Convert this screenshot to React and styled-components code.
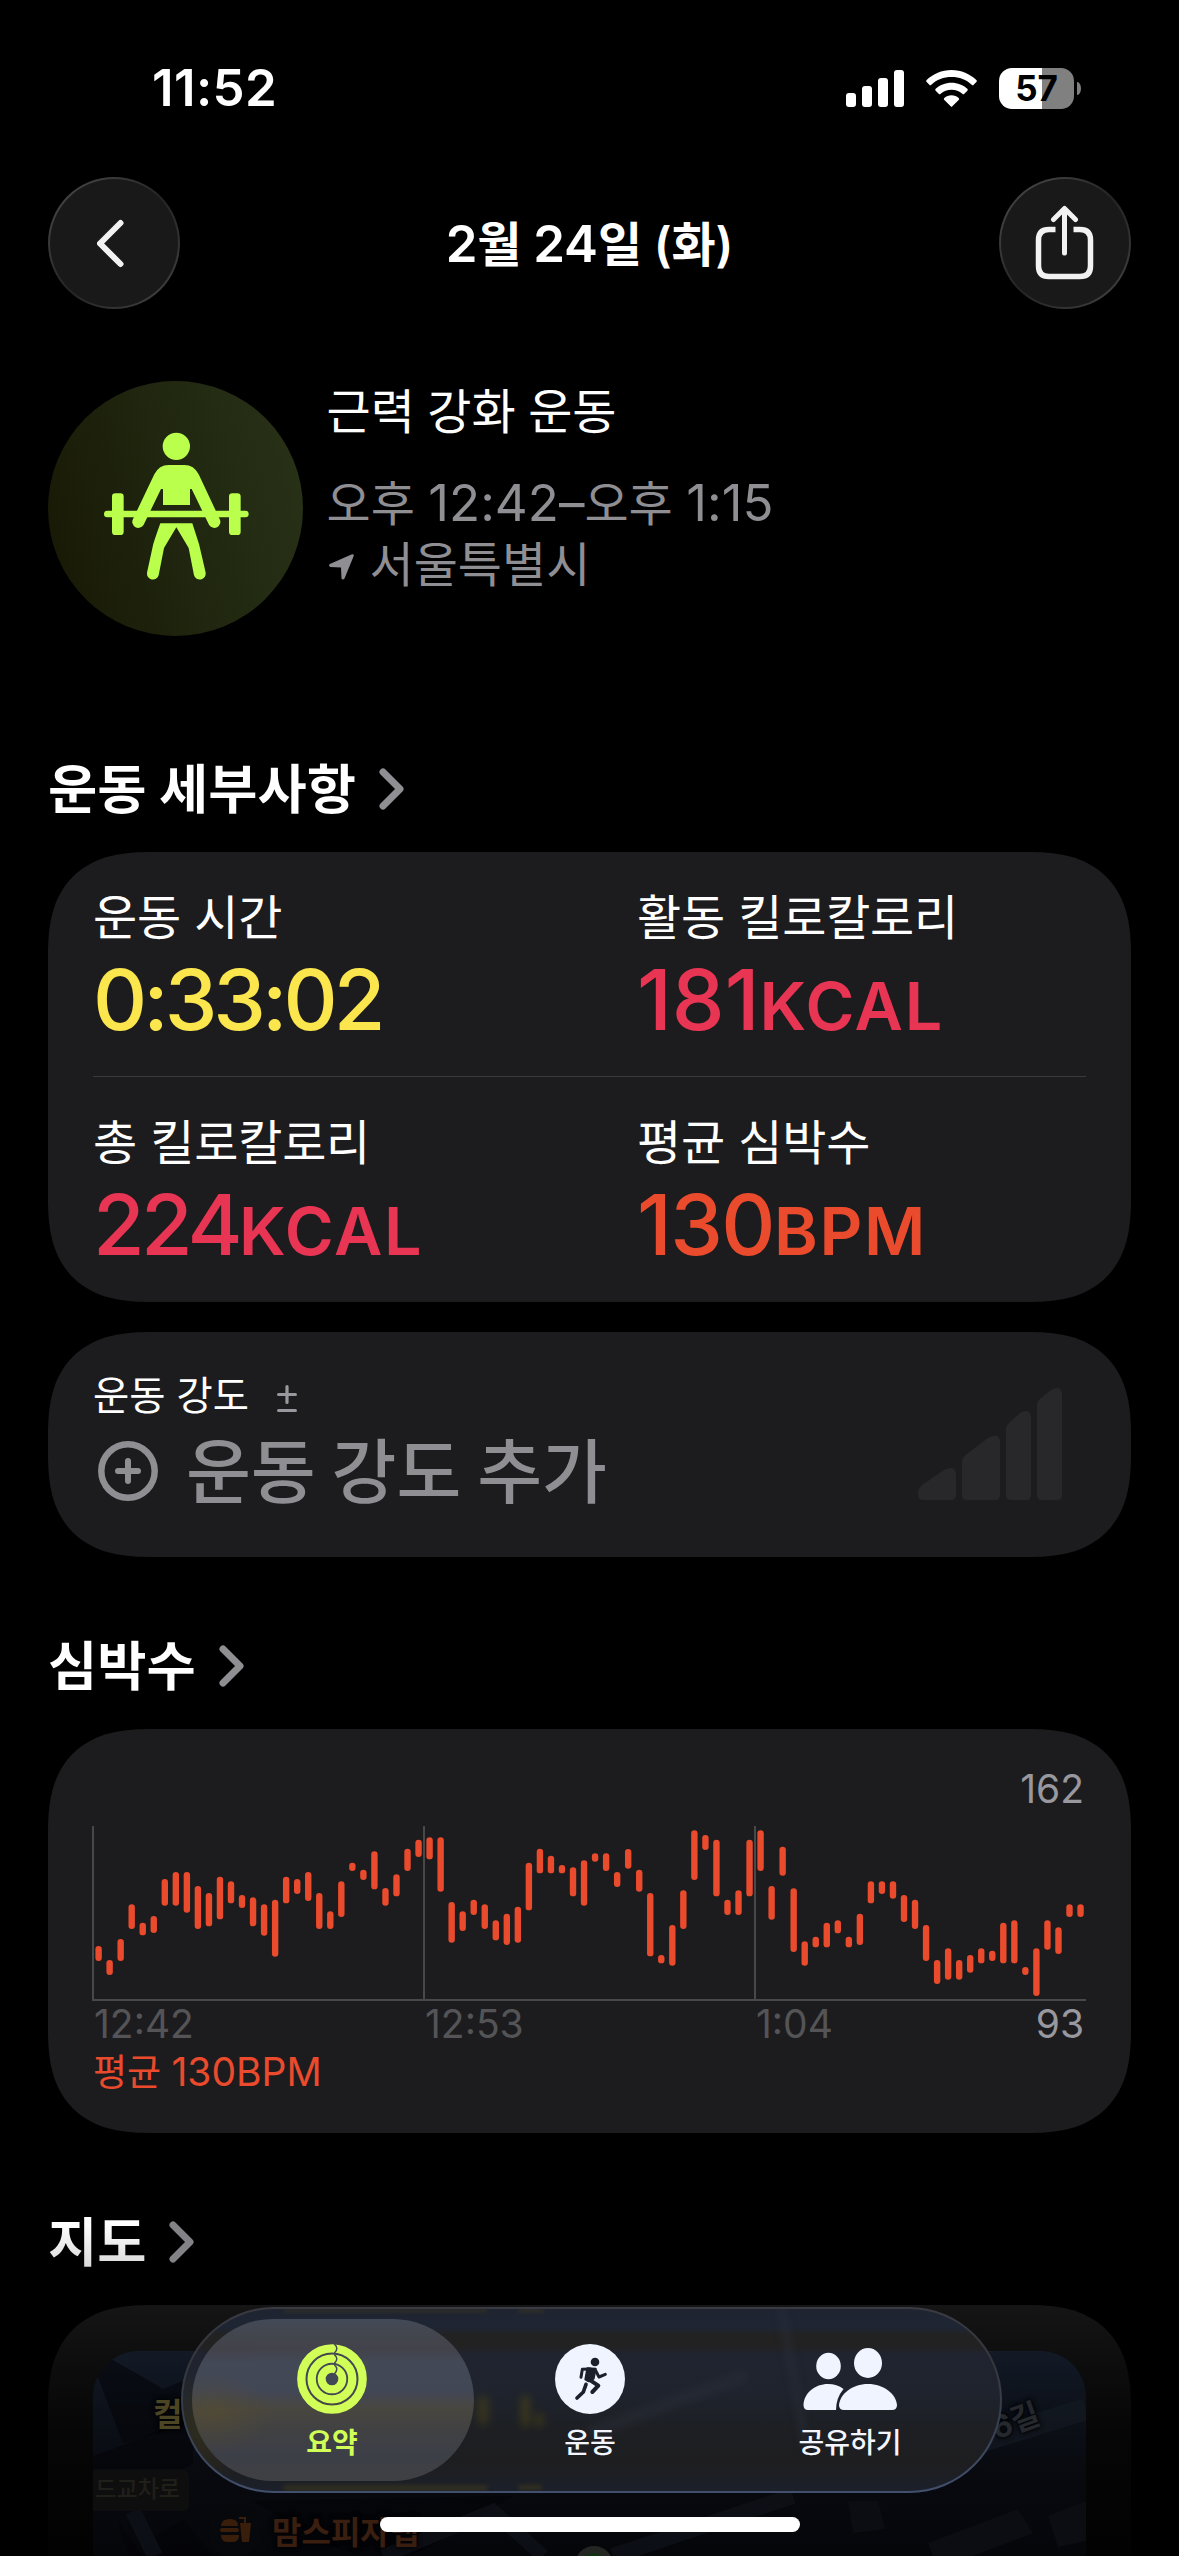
import React from 'react';
import styled, { createGlobalStyle } from 'styled-components';

const GlobalStyle = createGlobalStyle`
  * { box-sizing: border-box; }
  html, body { margin: 0; padding: 0; background: #000; }
  body { width: 1179px; height: 2556px; overflow: hidden; }
`;

const Screen = styled.main`
  position: relative;
  width: 1179px;
  height: 2556px;
  overflow: hidden;
  background: #000;
  color: #fff;
  font-family: Inter, 'Noto Sans CJK KR', sans-serif;
  white-space: nowrap;
`;

/* ---------- status bar ---------- */

const StatusBar = styled.div`
  display: flex;
  align-items: center;
  justify-content: space-between;
  height: 177px;
  padding: 0 98px 0 152px;
`;

const Clock = styled.span`
  margin-top: -2px;
  font-size: 51px;
  font-weight: 600;
  line-height: 60px;
  letter-spacing: 0.4px;
`;

const StatusIcons = styled.div`
  display: flex;
  align-items: center;
  gap: 22px;
`;

const Battery = styled.div`
  display: flex;
  align-items: center;
  gap: 3px;
`;

const BatteryBody = styled.div`
  display: flex;
  align-items: center;
  justify-content: center;
  width: 75px;
  height: 41px;
  border-radius: 13px;
  background: linear-gradient(90deg, #fff 57%, #808080 57%);
  color: #000;
  font-size: 35px;
  font-weight: 700;
  line-height: 41px;
`;

const BatteryTip = styled.div`
  width: 4px;
  height: 13px;
  border-radius: 0 4px 4px 0 / 0 7px 7px 0;
  background: #808080;
`;

/* ---------- navigation ---------- */

const NavBar = styled.header`
  display: grid;
  grid-template-columns: 132px 1fr 132px;
  align-items: center;
  height: 132px;
  padding: 0 48px;
`;

const RoundButton = styled.button`
  display: flex;
  align-items: center;
  justify-content: center;
  width: 132px;
  height: 132px;
  padding: 0;
  border: 2px solid transparent;
  border-radius: 50%;
  background:
    linear-gradient(#191919, #191919) padding-box,
    linear-gradient(135deg, #4a4a4a 0%, #3a3a3a 25%, #242424 50%, #333 75%, #484848 100%) border-box;
`;

const NavTitle = styled.h1`
  margin: 2px 0 0;
  text-align: center;
  font-size: 48px;
  font-weight: 600;
  line-height: 61px;
  letter-spacing: -0.15px;
`;

const Num = styled.span`
  font-size: 51px;
`;

/* ---------- workout header ---------- */

const Content = styled.div`
  padding: 0 48px;
`;

const Hero = styled.section`
  display: flex;
  gap: 23.5px;
  height: 255px;
  margin-top: 72px;
`;

const Medallion = styled.div`
  flex: none;
  width: 255px;
  height: 255px;
  border-radius: 50%;
  background: linear-gradient(75deg, #191a06 8%, #20260f 50%, #283217 95%);
`;

const HeroText = styled.div`
  display: flex;
  flex-direction: column;
`;

const HeroTitle = styled.div`
  margin-bottom: 30px;
  font-size: 48px;
  line-height: 61px;
  word-spacing: -1px;
`;

const HeroLine = styled.div`
  display: flex;
  align-items: center;
  gap: 16px;
  color: #8e8e93;
  font-size: 48px;
  line-height: 61px;

  svg { margin: 5px 0 0 2px; }
`;

/* ---------- sections ---------- */

const SectionHeader = styled.div`
  display: flex;
  align-items: center;
  gap: 23px;
  height: 64px;
  margin: ${(p) => p.$top || 76}px 0 32px;
  color: ${(p) => p.$color || '#8e8e93'};
`;

const SectionTitle = styled.h2`
  margin: 3px 0 0;
  background: ${(p) => (p.$fade ? 'linear-gradient(#fff 20%, #d8d8d8 90%)' : '#fff')};
  background-clip: text;
  color: transparent;
  font-size: 53.5px;
  font-weight: 700;
  line-height: 64px;
`;

const Card = styled.section`
  height: ${(p) => p.$h}px;
  padding: 0 45px;
  border-radius: 78px;
  background: #1c1c1e;
  @supports (corner-shape: superellipse(1.3)) {
    border-radius: 104px;
    corner-shape: superellipse(1.35);
  }
`;

const MetricRow = styled.div`
  display: grid;
  grid-template-columns: 544px 1fr;
  height: 225px;
  border-bottom: ${(p) => (p.$divider ? '1px solid #3a3a3c' : '0')};
`;

const Metric = styled.div`
  padding-top: 35px;
`;

const MetricLabel = styled.div`
  font-size: 48px;
  line-height: 61px;
  letter-spacing: -0.2px;
`;

const MetricValue = styled.div`
  margin-top: 10px;
  color: ${(p) => p.$color};
  font-size: 84px;
  font-weight: 500;
  line-height: 84px;
  letter-spacing: ${(p) => p.$track}px;
`;

const Unit = styled.span`
  font-size: 66.5px;
  font-weight: 600;
  letter-spacing: 1.7px;
`;

const EffortCard = styled(Card)`
  display: flex;
  justify-content: space-between;
  margin-top: 30px;
  padding-right: 69px;
`;

const EffortText = styled.div`
  padding-top: 40px;
`;

const EffortLabel = styled.div`
  display: flex;
  align-items: center;
  gap: 28px;
  color: #fff;
  font-size: 39.4px;
  line-height: 49px;
`;

const EffortAction = styled.div`
  display: flex;
  align-items: center;
  gap: 28px;
  margin-top: 4px;
  padding-left: 5px;
  color: #8e8e93;
  font-family: 'Noto Sans CJK KR', sans-serif;
  font-size: 70.5px;
  font-weight: 500;
  line-height: 84px;

  svg { margin-top: 7px; }
`;

/* ---------- heart rate ---------- */

const HeartCard = styled(Card)`
  display: flex;
  flex-direction: column;
`;

const MaxValue = styled.div`
  padding: 36px 2px 0 0;
  color: #98989e;
  font-size: 39px;
  line-height: 48px;
  text-align: right;
`;

const Plot = styled.svg`
  display: block;
  margin-top: 13px;
  overflow: visible;
`;

const AxisRow = styled.div`
  display: grid;
  grid-template-columns: 331px 331px 1fr auto;
  margin-top: -1px;
  padding: 0 2px 0 1px;
  color: #545457;
  font-size: 39px;
  line-height: 48px;
`;

const MinValue = styled.span`
  color: #98989e;
`;

const Average = styled.div`
  color: #eb4b2d;
  font-size: 37px;
  line-height: 48px;
`;

const AverageNum = styled.span`
  font-size: 39px;
`;

/* ---------- map ---------- */

const MapCard = styled(Card)`
  padding-top: 46px;
  background: linear-gradient(#151515 0, #0d0d0d 60px, #060606 130px, #020202 250px);
`;

const MapView = styled.div`
  position: relative;
  height: 500px;
  overflow: hidden;
  border-radius: 46px;
  background: linear-gradient(#131a26 0, #0d121b 50px, #080a0f 120px, #05060a 205px);
`;

const MapDrawing = styled.svg`
  position: absolute;
  inset: 0;
`;

const Place = styled.span`
  position: absolute;
  left: ${(p) => p.$x}px;
  top: ${(p) => p.$y}px;
  color: ${(p) => p.$color};
  font-size: ${(p) => p.$size || 32}px;
  font-weight: 700;
  line-height: 40px;
  transform: rotate(${(p) => p.$turn || 0}deg);
  text-shadow: 0 0 5px #020305, 0 0 5px #020305;
`;

const Junction = styled.span`
  position: absolute;
  left: 0;
  top: 119px;
  width: 96px;
  height: 41px;
  padding-right: 9px;
  border-radius: 0 6px 6px 0;
  background: #0f0e0e;
  color: #211f1a;
  text-align: right;
  font-size: 23px;
  font-weight: 500;
  line-height: 39px;
`;

/* ---------- tab bar ---------- */

const TabBar = styled.nav`
  position: absolute;
  left: 181px;
  top: 2307px;
  display: flex;
  width: 821px;
  height: 186px;
  padding: 12px 10px 12px 9px;
  border: 2px solid transparent;
  border-radius: 93px;
  background:
    radial-gradient(ellipse 50px 60px at 18px 120px, rgba(82, 72, 25, 0.35), transparent) padding-box,
    linear-gradient(#1f2430 0, #1e2533 18px, #222222 26px, #222223 38px, #1f2430 46px, #1e232d 85px, #1d1f23 120px, #1e1e20 155px, #1b202b 184px) padding-box,
    linear-gradient(#3a3a42, #35373c 30%, #37404f 60%, #42506e) border-box;
  overflow: hidden;
`;

const Glow = styled.span`
  position: absolute;
  left: ${(p) => p.$x}px;
  top: ${(p) => p.$y}px;
  width: ${(p) => p.$w}px;
  height: ${(p) => p.$h}px;
  border-radius: 6px;
  background: ${(p) => p.$color || '#5a4d12'};
  opacity: ${(p) => p.$o || 0.4};
  filter: blur(${(p) => p.$blur || 4}px);
  transform: rotate(${(p) => p.$turn || 0}deg);
`;

const Tab = styled.button`
  position: relative;
  display: flex;
  flex: none;
  flex-direction: column;
  align-items: center;
  width: ${(p) => p.$w}px;
  height: 162px;
  margin-top: -2px;
  padding: 25px ${(p) => (p.$active ? 2 : 0)}px 0 0;
  border: 0;
  border-radius: 81px;
  background: ${(p) =>
    p.$active
      ? 'radial-gradient(ellipse 60px 40px at 20px 94px, rgba(88,78,46,0.5), transparent), linear-gradient(#434a58 0, #43464e 14px, #42424a 30px, #434957 44px, #424755 72px, #48463f 90px, #414143 112px, #3d3f48 136px, #3f4042 162px)'
      : 'transparent'};
  color: ${(p) => (p.$active ? '#d1ff57' : '#f4f6ff')};
  font-family: 'Noto Sans CJK KR', sans-serif;
  font-size: 28px;
  font-weight: ${(p) => (p.$active ? 700 : 500)};
`;

const TabLabel = styled.span`
  margin-top: 10px;
  line-height: 34px;
`;

const HomeIndicator = styled.div`
  position: absolute;
  left: 380px;
  top: 2517px;
  width: 420px;
  height: 15px;
  border-radius: 8px;
  background: #fff;
`;

/* ---------- icons ---------- */

const Signal = () => (
  <svg width="58" height="37" viewBox="0 0 58 37" fill="#fff">
    <rect x="0" y="23" width="10" height="14" rx="3" />
    <rect x="16" y="16" width="10" height="21" rx="3" />
    <rect x="32" y="8" width="10" height="29" rx="3" />
    <rect x="48" y="0" width="10" height="37" rx="3" />
  </svg>
);

const Wifi = () => (
  <svg width="51" height="37" viewBox="0 0 153 111" fill="#fff">
    <path d="M76.500 0 C106 0 132 12 151 30 Q154 33 151 36 L143 44 Q140 47 137 44 C121 29 100 21 76.500 21 C53 21 32 29 16 44 Q13 47 10 44 L2 36 Q-1 33 2 30 C21 12 47 0 76.500 0Z" />
    <path d="M76.500 38 C95 38 112 45 124 56 Q127 59 124 62 L115 71 Q112 74 109 71 C100 63 89 59 76.500 59 C64 59 53 63 44 71 Q41 74 38 71 L29 62 Q26 59 29 56 C41 45 58 38 76.500 38Z" />
    <path d="M76.500 76 C85 76 92 79 98 84 Q101 87 98 90 L79 109 Q76.500 112 74 109 L55 90 Q52 87 55 84 C61 79 68 76 76.500 76Z" />
  </svg>
);

const BackArrow = () => (
  <svg width="34" height="54" viewBox="0 0 34 54" fill="none" stroke="#f2f2f2" strokeWidth="6" strokeLinecap="round" strokeLinejoin="round">
    <path d="M23.500 7 L3 27.500 L23.500 48" />
  </svg>
);

const Share = () => (
  <svg width="60" height="76" viewBox="0 0 60 76" fill="none" stroke="#f2f2f2" strokeWidth="5.500">
    <path d="M20.500 24.500 H14 Q3.500 24.500 3.500 35 V61 Q3.500 71.500 14 71.500 H45 Q55.500 71.500 55.500 61 V35 Q55.500 24.500 45 24.500 H38.500" />
    <path d="M29.500 4 V48 M18.500 14.500 L29.500 3.500 L40.500 14.500" strokeWidth="5" strokeLinecap="round" strokeLinejoin="round" />
  </svg>
);

const Lifter = () => (
  <svg width="255" height="255" viewBox="-126 -117 765 765" fill="#bbff4d">
    <circle cx="259" cy="79" r="41" />
    <path d="M236 135 H283 Q312 135 326 163 L389 297 A18 18 0 0 1 357 314 L305 207 H300 V255 H219 V207 H213 L161 314 A18 18 0 0 1 129 297 L193 163 Q207 135 236 135Z" />
    <rect x="42" y="272" width="434" height="20" rx="10" />
    <rect x="66" y="220" width="35" height="125" rx="10" />
    <rect x="417" y="220" width="35" height="125" rx="10" />
    <path d="M211 310 H307 L327 372 Q329 380 347 458 A18 18 0 0 1 312 466 L296 384 L259 322 L222 384 L206 466 A18 18 0 0 1 171 458 L188 380 Q189 372 211 310Z" />
  </svg>
);

const LocationArrow = () => (
  <svg width="25" height="26" viewBox="0 0 25 26" fill="#8e8e93">
    <path d="M22.500 .5 Q25.500 -.5 24.500 2.500 L15.500 24.500 Q14 26.500 12.500 24.500 L12 13.500 L1.500 13 Q-1 12 .8 10Z" />
  </svg>
);

const Chevron = () => (
  <svg width="25" height="42" viewBox="0 0 25 42" fill="none" stroke="currentColor" strokeWidth="7" strokeLinecap="round" strokeLinejoin="round" transform="translate(0 1)">
    <path d="M4 4 L21 21 L4 38" />
  </svg>
);

const PlusMinus = () => (
  <svg width="20" height="28" viewBox="0 0 20 28" fill="none" stroke="#98989e" strokeWidth="3.200" strokeLinecap="round" transform="translate(0 2)">
    <path d="M1.600 9.500 H18.400 M10 1.600 V17.500 M1.600 25.500 H18.400" />
  </svg>
);

const PlusCircle = () => (
  <svg width="60" height="60" viewBox="0 0 60 60" fill="none" stroke="#8e8e93" strokeWidth="6.500" strokeLinecap="round">
    <circle cx="30" cy="30" r="26.700" />
    <path d="M20 30 H40 M30 20 V40" strokeWidth="6" />
  </svg>
);

const EffortGraph = styled.svg`
  margin-top: 56px;
`;

const EffortBars = () => (
  <EffortGraph width="144" height="112" viewBox="0 0 144 112" fill="#28282a">
    <path d="M0 105 Q0 101 4 97 L26 82 Q38 76 38 88 V107 Q38 112 33 112 H5 Q0 112 0 107Z" />
    <path d="M44 74 Q44 69 49 66 L70 50 Q82 43 82 55 V107 Q82 112 77 112 H49 Q44 112 44 107Z" />
    <path d="M88 42 Q88 37 92 34 L102 25 Q113 19 113 30 V107 Q113 112 108 112 H93 Q88 112 88 107Z" />
    <path d="M119 18 Q119 13 123 10 L133 2 Q144 -4 144 8 V107 Q144 112 139 112 H124 Q119 112 119 107Z" />
  </EffortGraph>
);

const RingsIcon = () => (
  <svg width="70" height="70" viewBox="0 0 210 210" fill="none">
    <circle cx="105" cy="105" r="92" stroke="#d1ff57" strokeWidth="25" />
    <circle cx="105" cy="105" r="61" stroke="#d1ff57" strokeWidth="25" />
    <circle cx="105" cy="105" r="31" stroke="#d1ff57" strokeWidth="24" />
    <path d="M112 0 Q127 13 112 27 M112 32 Q127 44 112 58 M112 63 Q127 74 112 90" stroke="#434957" strokeWidth="4.500" />
  </svg>
);

const RunnerIcon = () => (
  <svg width="70" height="70" viewBox="0 0 210 210" fill="none">
    <circle cx="105" cy="105" r="105" fill="#f0f4ff" />
    <circle cx="120" cy="54" r="13" fill="#1b202a" />
    <path d="M97 73 L122 74 L116 104 L101 112 L91 106Z" fill="#1b202a" stroke="#1b202a" strokeWidth="6" strokeLinejoin="round" />
    <g stroke="#1b202a" strokeLinecap="round" strokeLinejoin="round">
      <path d="M105 75 L82 76 L78 100" strokeWidth="9" />
      <path d="M121 78 L132 99 L151 91" strokeWidth="9" />
      <path d="M106 109 L130 125 L112 144" strokeWidth="12" />
      <path d="M93 121 L85 144 L66 162" strokeWidth="11" />
    </g>
  </svg>
);

const PeopleIcon = () => (
  <svg width="94" height="70" viewBox="0 0 94 70" fill="#f0f4ff">
    <ellipse cx="25.500" cy="22" rx="12.300" ry="13.200" />
    <ellipse cx="65" cy="19" rx="14" ry="15" />
    <path d="M40.500 45 Q33 54 33 66 H5 Q.5 66 .5 61 C1 49 12 40 25 40 Q34 40 40.500 45Z" />
    <path d="M65 40 C81 40 93 50 94 61 Q94 66 89 66 H41 Q36 66 36 61 C37 50 49 40 65 40Z" />
  </svg>
);

/* ---------- heart rate data: [top, bottom] of each beat range, in thirds of a pixel ---------- */

const beats = [
  [558, 603], [600, 645], [537, 603], [433, 507], [488, 526], [468, 519], [357, 437], [336, 437], [336, 458],
  [378, 507], [399, 499], [350, 478], [364, 430], [405, 444], [412, 499], [433, 527], [419, 590], [350, 430],
  [357, 402], [336, 423], [399, 507], [454, 507], [364, 471], [308, 333], [329, 360], [274, 388], [384, 437],
  [343, 409], [266, 333], [239, 291], [232, 298], [232, 395], [426, 548], [454, 513], [419, 465], [433, 507],
  [481, 541], [461, 555], [440, 548], [308, 451], [266, 340], [287, 340], [315, 340], [322, 409], [301, 437],
  [280, 305], [280, 333], [336, 381], [267, 326], [329, 395], [399, 589], [585, 610], [495, 617], [391, 507],
  [211, 360], [225, 270], [239, 409], [419, 465], [391, 465], [239, 409], [211, 333], [378, 479], [260, 347],
  [385, 576], [544, 617], [530, 562], [488, 562], [481, 520], [530, 562], [461, 555], [364, 430], [364, 402],
  [364, 416], [405, 486], [419, 507], [495, 603], [600, 672], [565, 659], [600, 659], [585, 638], [565, 610],
  [572, 603], [488, 610], [481, 610], [621, 645], [565, 708], [481, 569], [502, 582], [433, 471], [433, 471],
];

const HeartPlot = () => (
  <Plot width="993" height="175" viewBox="0 0 993 175">
    <path d="M0 0 V174 M331 0 V174 M662 0 V174 M-1 174 H993" stroke="#48484a" strokeWidth="2" fill="none" />
    {beats.map(([top, bottom], i) => (
      <rect
        key={i}
        x={2.4 + i * 11.033}
        y={(top - 198) / 3}
        width="6.400"
        height={(bottom - top) / 3}
        rx="3.200"
        fill="#eb4b2d"
      />
    ))}
  </Plot>
);

const metrics = [
  [
    { label: '운동 시간', value: '0:33:02', color: '#fbe64d', track: -4 },
    { label: '활동 킬로칼로리', value: '181', unit: 'KCAL', color: '#e73553', track: 0 },
  ],
  [
    { label: '총 킬로칼로리', value: '224', unit: 'KCAL', color: '#e73553', track: -3.8 },
    { label: '평균 심박수', value: '130', unit: 'BPM', color: '#eb4b2d', track: -1.6 },
  ],
];

export default function App() {
  return (
    <Screen>
      <GlobalStyle />
      <StatusBar>
        <Clock>11:52</Clock>
        <StatusIcons>
          <Signal />
          <Wifi />
          <Battery>
            <BatteryBody>57</BatteryBody>
            <BatteryTip />
          </Battery>
        </StatusIcons>
      </StatusBar>

      <NavBar>
        <RoundButton aria-label="뒤로"><BackArrow /></RoundButton>
        <NavTitle><Num>2</Num>월 <Num>24</Num>일 (화)</NavTitle>
        <RoundButton aria-label="공유"><Share /></RoundButton>
      </NavBar>

      <Content>
        <Hero>
          <Medallion><Lifter /></Medallion>
          <HeroText>
            <HeroTitle>근력 강화 운동</HeroTitle>
            <HeroLine><span>오후 <Num>12:42–</Num>오후 <Num>1:15</Num></span></HeroLine>
            <HeroLine><LocationArrow />서울특별시</HeroLine>
          </HeroText>
        </Hero>

        <SectionHeader $top={120}>
          <SectionTitle>운동 세부사항</SectionTitle>
          <Chevron />
        </SectionHeader>
        <Card $h={450}>
          {metrics.map((row, r) => (
            <MetricRow key={r} $divider={r === 0}>
              {row.map((m) => (
                <Metric key={m.label}>
                  <MetricLabel>{m.label}</MetricLabel>
                  <MetricValue $color={m.color} $track={m.track}>
                    {m.value}
                    {m.unit && <Unit>{m.unit}</Unit>}
                  </MetricValue>
                </Metric>
              ))}
            </MetricRow>
          ))}
        </Card>

        <EffortCard $h={225}>
          <EffortText>
            <EffortLabel>운동 강도 <PlusMinus /></EffortLabel>
            <EffortAction><PlusCircle />운동 강도 추가</EffortAction>
          </EffortText>
          <EffortBars />
        </EffortCard>

        <SectionHeader>
          <SectionTitle>심박수</SectionTitle>
          <Chevron />
        </SectionHeader>
        <HeartCard $h={404}>
          <MaxValue>162</MaxValue>
          <HeartPlot />
          <AxisRow>
            <span>12:42</span>
            <span>12:53</span>
            <span>1:04</span>
            <MinValue>93</MinValue>
          </AxisRow>
          <Average>평균 <AverageNum>130BPM</AverageNum></Average>
        </HeartCard>

        <SectionHeader $color="#838387">
          <SectionTitle $fade>지도</SectionTitle>
          <Chevron />
        </SectionHeader>
        <MapCard $h={560}>
          <MapView>
            <MapDrawing width="993" height="205" viewBox="0 0 993 205">
              <g fill="#030407" fillOpacity="0.550">
                <path d="M18 8 L48 25 L70 38 L100 26 V72 L30 92 L4 24Z" />
                <path d="M0 105 L20 98 L100 66 V112 L90 118 H0Z" />
                <path d="M62 186 L90 168 L120 205 H70Z M24 170 L50 205 H36Z" />
                <path d="M160 150 L420 145 L330 200 H250Z" />
              </g>
              <g stroke="#10131a" strokeOpacity="0.700" fill="none">
                <path d="M40 160 L62 205" strokeWidth="16" />
                <path d="M290 205 L400 160 L450 205" strokeWidth="14" />
                <path d="M520 205 L700 145" strokeWidth="16" />
                <path d="M870 96 L993 58" strokeWidth="22" stroke="#141922" />
              </g>
              <g fill="#0b0d12">
                <path d="M755 150 H785 L792 178 L760 182Z" />
                <path d="M835 192 L925 158 L940 182 L880 205 H840Z" />
                <path d="M955 165 L993 150 V190 L965 196Z" />
                <path d="M828 0 L900 0 L836 20Z" fill="#18202c" />
              </g>
              <circle cx="142" cy="180" r="27" fill="#07080b" />
              <g fill="#3a1e0c">
                <path d="M128 175 Q128 168 137 168 Q145 168 145 175Z" />
                <rect x="127" y="177" width="19" height="4" rx="2" />
                <path d="M128 184 H146 Q146 191 140 191 H134 Q128 191 128 184Z" />
                <path d="M147 172 H158 L156 191 H149Z" />
              </g>
              <path d="M152 172 V167 H146" stroke="#3a1e0c" strokeWidth="2" fill="none" />
              <circle cx="501" cy="214" r="19" fill="#232622" />
              <circle cx="501" cy="214" r="12" fill="#123110" />
            </MapDrawing>
            <Place $x={60} $y={44} $color="#4c4524">컬러</Place>
            <Place $x={179} $y={162} $color="#3a1f10" $size={32}>맘스피자랩</Place>
            <Place $x={898} $y={50} $color="#25282d" $size={31} $turn={-20}>6길</Place>
            <Junction>드교차로</Junction>
          </MapView>
        </MapCard>
      </Content>

      <TabBar>
        <Glow $x={100} $y={0} $w={205} $h={3} $blur={2} $o={0.35} />
        <Glow $x={335} $y={0} $w={26} $h={3} $blur={2} $o={0.4} />
        <Glow $x={100} $y={176} $w={205} $h={6} $blur={2} $o={0.35} />
        <Glow $x={335} $y={176} $w={24} $h={5} $blur={2} $o={0.4} />
        <Glow $x={294} $y={86} $w={12} $h={30} />
        <Glow $x={338} $y={86} $w={9} $h={32} $o={0.5} />
        <Glow $x={352} $y={104} $w={8} $h={14} $o={0.5} />
        <Glow $x={400} $y={88} $w={170} $h={14} $color="#2b303a" $turn={-20} $blur={3} />
        <Glow $x={535} $y={60} $w={150} $h={10} $color="#2b303a" $turn={80} $blur={3} />
        <Tab $w={282} $active>
          <RingsIcon />
          <TabLabel>요약</TabLabel>
        </Tab>
        <Tab $w={232}>
          <RunnerIcon />
          <TabLabel>운동</TabLabel>
        </Tab>
        <Tab $w={288}>
          <PeopleIcon />
          <TabLabel>공유하기</TabLabel>
        </Tab>
      </TabBar>
      <HomeIndicator />
    </Screen>
  );
}
